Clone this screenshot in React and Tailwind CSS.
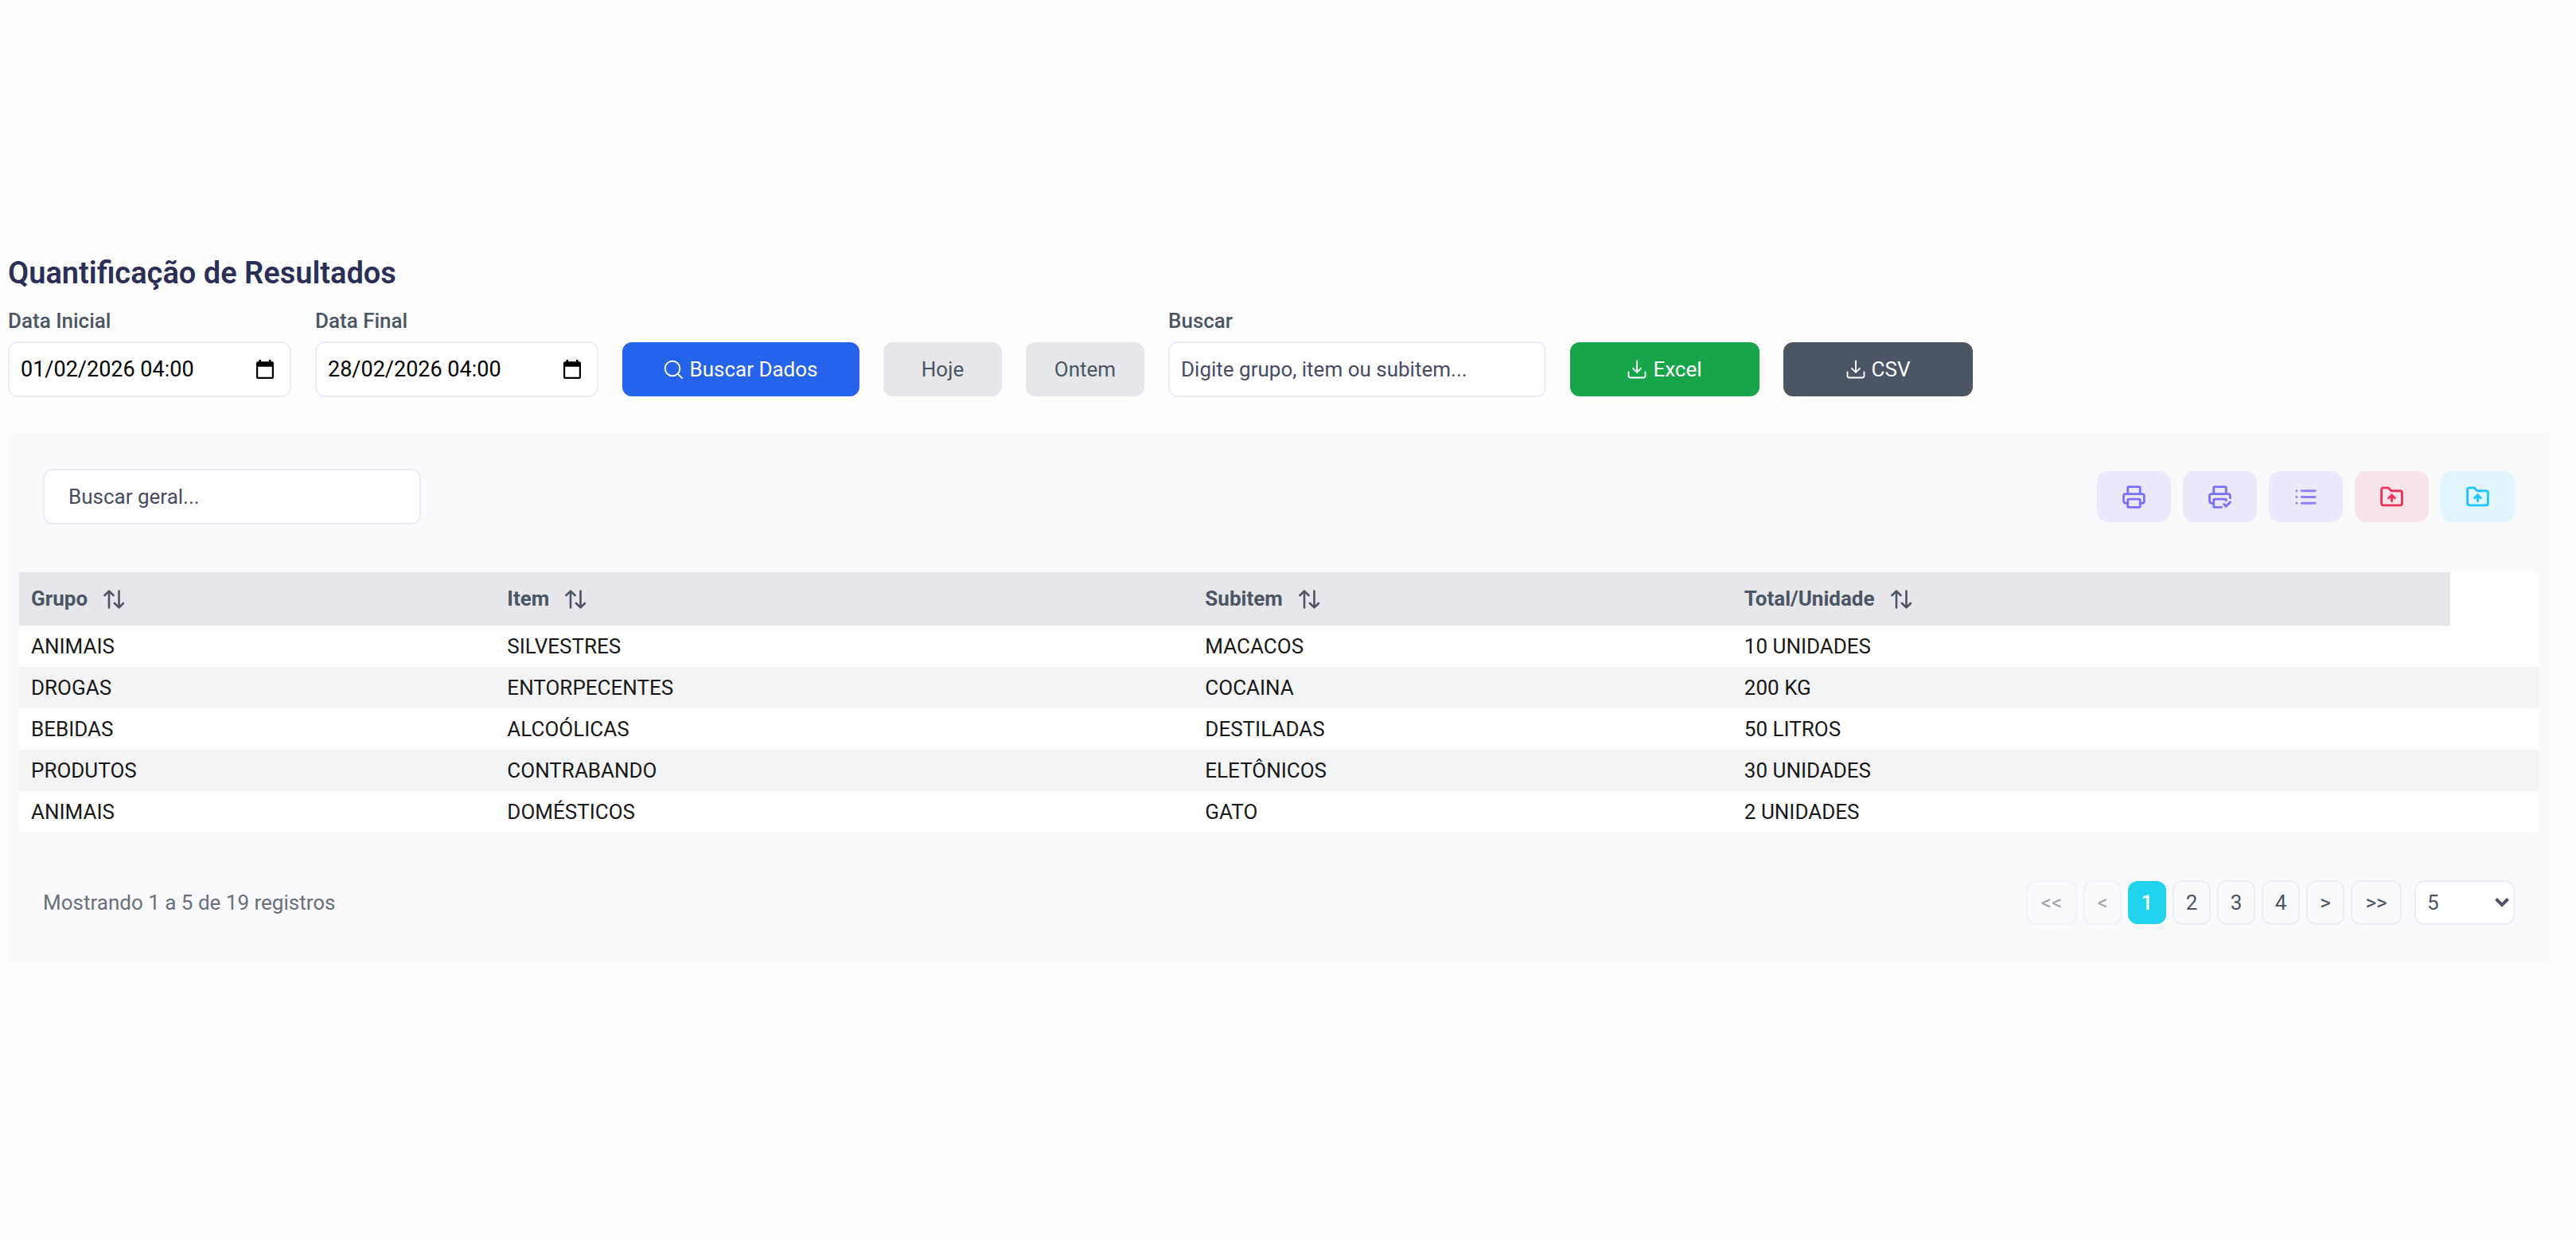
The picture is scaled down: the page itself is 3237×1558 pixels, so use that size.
import { useState } from "react";

const COLUMNS = [
  { key: "grupo", label: "Grupo", width: "w-[18.9%]" },
  { key: "item", label: "Item", width: "w-[27.7%]" },
  { key: "subitem", label: "Subitem", width: "w-[21.4%]" },
  { key: "total", label: "Total/Unidade", width: "w-[28.5%]" },
];

const ROWS = [
  { grupo: "ANIMAIS", item: "SILVESTRES", subitem: "MACACOS", total: "10 UNIDADES" },
  { grupo: "DROGAS", item: "ENTORPECENTES", subitem: "COCAINA", total: "200 KG" },
  { grupo: "BEBIDAS", item: "ALCOÓLICAS", subitem: "DESTILADAS", total: "50 LITROS" },
  { grupo: "PRODUTOS", item: "CONTRABANDO", subitem: "ELETÔNICOS", total: "30 UNIDADES" },
  { grupo: "ANIMAIS", item: "DOMÉSTICOS", subitem: "GATO", total: "2 UNIDADES" },
];

const inputClass =
  "h-[70px] rounded-xl border-2 border-[#ebedf6] bg-white outline-none placeholder:text-[#474b66] placeholder:opacity-100";
const buttonClass = "mb-px flex h-[68px] items-center justify-center gap-2 rounded-xl";
const pageButtonClass =
  "flex h-14 items-center justify-center rounded-xl border-2 border-[#ebedf6] disabled:opacity-50";

// Icons
function SearchIcon() {
  return (
    <svg className="size-6" viewBox="0 0 24 24" fill="none" stroke="currentColor" strokeWidth="1.9" strokeLinecap="round">
      <circle cx="11" cy="11" r="9.3" />
      <path d="M17.8 17.8 23 23" />
    </svg>
  );
}

function DownloadIcon() {
  return (
    <svg className="size-6" viewBox="0 0 24 24" fill="none" stroke="currentColor" strokeWidth="1.9" strokeLinecap="round" strokeLinejoin="round">
      <path d="M12 1.5v14" />
      <path d="m7 10.8 5 5 5-5" />
      <path d="M1.5 15.5V20A2.5 2.5 0 0 0 4 22.5h16a2.5 2.5 0 0 0 2.5-2.5v-4.5" />
    </svg>
  );
}

function SortIcon() {
  return (
    <svg className="h-6 w-[26px]" viewBox="0 0 26 24" fill="none" stroke="currentColor" strokeWidth="2.6" strokeLinecap="round" strokeLinejoin="round">
      <path d="M7 22.5V2M1.5 7 7 1.6 12.5 7" />
      <path d="M19.5 1.5V22M14 17l5.5 5.4L25 17" />
    </svg>
  );
}

function CalendarIcon() {
  return (
    <svg className="h-6 w-[22px]" viewBox="0 0 22 24" fill="currentColor">
      <path
        fillRule="evenodd"
        d="M3.5 0h2.6v2.2h9.8V0h2.6v2.2H20a2 2 0 0 1 2 2V22a2 2 0 0 1-2 2H2a2 2 0 0 1-2-2V4.2a2 2 0 0 1 2-2h1.5V0ZM2.2 8.800V21.800h17.600V8.800H2.200Z"
      />
    </svg>
  );
}

function ActionIcon({ children }) {
  return (
    <svg className="size-[31px]" viewBox="0 0 24 24" fill="none" stroke="currentColor" strokeWidth="2.2" strokeLinecap="round" strokeLinejoin="round">
      {children}
    </svg>
  );
}

const folderUp = (
  <>
    <path d="M20 20a2 2 0 0 0 2-2V8a2 2 0 0 0-2-2h-7.9a2 2 0 0 1-1.69-.9L9.6 3.9A2 2 0 0 0 7.93 3H4a2 2 0 0 0-2 2v13a2 2 0 0 0 2 2Z" />
    <path d="M12 10v6" />
    <path d="m9 13 3-3 3 3" />
  </>
);

const ACTIONS = [
  {
    label: "Imprimir",
    color: "bg-[#eaeafc] text-[#7c70ff]",
    icon: (
      <>
        <path d="M6 18H4a2 2 0 0 1-2-2v-5a2 2 0 0 1 2-2h16a2 2 0 0 1 2 2v5a2 2 0 0 1-2 2h-2" />
        <path d="M6 9V3a1 1 0 0 1 1-1h10a1 1 0 0 1 1 1v6" />
        <rect x="6" y="14" width="12" height="8" rx="1" />
      </>
    ),
  },
  {
    label: "Imprimir selecionados",
    color: "bg-[#eaeafc] text-[#7c70ff]",
    icon: (
      <>
        <path d="M13.5 22H7a1 1 0 0 1-1-1v-6a1 1 0 0 1 1-1h10a1 1 0 0 1 1 1v.5" />
        <path d="m16 19 2 2 4-4" />
        <path d="M6 18H4a2 2 0 0 1-2-2v-5a2 2 0 0 1 2-2h16a2 2 0 0 1 2 2v2" />
        <path d="M6 9V3a1 1 0 0 1 1-1h10a1 1 0 0 1 1 1v6" />
      </>
    ),
  },
  {
    label: "Colunas",
    color: "bg-[#eaeafc] text-[#8b81ff]",
    icon: <path d="M3 6h.01M3 12h.01M3 18h.01M8 6h13M8 12h13M8 18h13" />,
  },
  { label: "Exportar PDF", color: "bg-[#f8e5e9] text-[#ee3358]", icon: folderUp },
  { label: "Exportar Excel", color: "bg-[#e0f5fc] text-[#1cc6ff]", icon: folderUp },
];

function DateField({ id, label, value, onChange }) {
  return (
    <div className="flex flex-col">
      <label htmlFor={id} className="mb-2 leading-9 font-medium">
        {label}
      </label>
      <div className={`${inputClass} flex w-[356px] items-center pr-5 pl-[14px]`}>
        <input
          id={id}
          value={value}
          onChange={(e) => onChange(e.target.value)}
          className="min-w-0 flex-1 bg-transparent text-[27px] text-black outline-none"
        />
        <button aria-label={`Abrir calendário: ${label}`} className="text-black">
          <CalendarIcon />
        </button>
      </div>
    </div>
  );
}

export default function App() {
  const [start, setStart] = useState("01/02/2026 04:00");
  const [end, setEnd] = useState("28/02/2026 04:00");
  const [search, setSearch] = useState("");
  const [globalSearch, setGlobalSearch] = useState("");
  const [page, setPage] = useState(1);

  return (
    <div className="min-h-screen bg-[#fefefe] pt-[317px] pr-[33px] pl-[10px] font-['Roboto',sans-serif] text-[26px] text-[#4b5563]">
      <h1 className="mb-4 text-[38px] leading-[52px] font-semibold text-[#2b2f57]">
        Quantificação de Resultados
      </h1>

      {/* Filters */}
      <div className="mb-[45px] flex flex-wrap items-end gap-[30px]">
        <DateField id="data-inicial" label="Data Inicial" value={start} onChange={setStart} />
        <DateField id="data-final" label="Data Final" value={end} onChange={setEnd} />
        <button className={`${buttonClass} w-[298px] bg-[#2563eb] text-white`}>
          <SearchIcon />
          Buscar Dados
        </button>
        <button className={`${buttonClass} w-[149px] bg-gray-200`}>Hoje</button>
        <button className={`${buttonClass} w-[149px] bg-gray-200`}>Ontem</button>
        <div className="flex flex-col">
          <label htmlFor="buscar" className="mb-2 leading-9 font-medium">
            Buscar
          </label>
          <input
            id="buscar"
            value={search}
            onChange={(e) => setSearch(e.target.value)}
            placeholder="Digite grupo, item ou subitem..."
            className={`${inputClass} w-[475px] px-[14px]`}
          />
        </div>
        <button className={`${buttonClass} w-[238px] bg-[#18a54a] text-white`}>
          <DownloadIcon />
          Excel
        </button>
        <button className={`${buttonClass} w-[238px] bg-[#4b5563] text-white`}>
          <DownloadIcon />
          CSV
        </button>
      </div>

      {/* Table panel */}
      <div className="bg-[#f9fafc] px-[14px] py-[45px]">
        <div className="mb-[60px] flex items-center justify-between px-[30px]">
          <input
            aria-label="Buscar geral"
            value={globalSearch}
            onChange={(e) => setGlobalSearch(e.target.value)}
            placeholder="Buscar geral..."
            className={`${inputClass} w-[475px] px-[30px]`}
          />
          <div className="flex gap-[15px]">
            {ACTIONS.map((action) => (
              <button
                key={action.label}
                aria-label={action.label}
                className={`${action.color} flex h-16 w-[93px] items-center justify-center rounded-[14px]`}
              >
                <ActionIcon>{action.icon}</ActionIcon>
              </button>
            ))}
          </div>
        </div>

        <table className="w-full table-fixed bg-white text-left">
          <thead>
            <tr className="h-[67px]">
              {COLUMNS.map((col) => (
                <th key={col.key} className={`${col.width} bg-gray-200 px-[15px] font-bold`}>
                  <button className="flex items-center gap-5">
                    {col.label}
                    <SortIcon />
                  </button>
                </th>
              ))}
              <td />
            </tr>
          </thead>
          <tbody className="text-[#181818]">
            {ROWS.map((row, i) => (
              <tr key={i} className="h-[52px] even:bg-gray-100">
                {COLUMNS.map((col) => (
                  <td key={col.key} className="px-[15px]">
                    {row[col.key]}
                  </td>
                ))}
                <td />
              </tr>
            ))}
          </tbody>
        </table>

        <div className="mt-[60px] flex items-center justify-between px-[30px]">
          <p className="text-[#68707c]">Mostrando 1 a 5 de 19 registros</p>
          <div className="flex items-center gap-2">
            <button disabled={page === 1} onClick={() => setPage(1)} className={`${pageButtonClass} w-16`}>
              &lt;&lt;
            </button>
            <button disabled={page === 1} onClick={() => setPage(page - 1)} className={`${pageButtonClass} w-12`}>
              &lt;
            </button>
            {[1, 2, 3, 4].map((n) => (
              <button
                key={n}
                onClick={() => setPage(n)}
                className={
                  n === page
                    ? "flex h-[54px] w-12 items-center justify-center rounded-xl bg-[#22d3ee] font-medium text-white"
                    : `${pageButtonClass} w-12`
                }
              >
                {n}
              </button>
            ))}
            <button disabled={page === 4} onClick={() => setPage(page + 1)} className={`${pageButtonClass} w-12`}>
              &gt;
            </button>
            <button disabled={page === 4} onClick={() => setPage(4)} className={`${pageButtonClass} w-16`}>
              &gt;&gt;
            </button>
            <div className="relative ml-2">
              <select
                aria-label="Registros por página"
                defaultValue="5"
                className="h-14 w-[126px] appearance-none rounded-xl border-2 border-[#ebedf6] bg-white pl-[14px]"
              >
                <option>5</option>
                <option>10</option>
                <option>20</option>
              </select>
              <svg
                className="pointer-events-none absolute top-[22px] right-[7px] h-3 w-[18px]"
                viewBox="0 0 18 12"
                fill="none"
                stroke="currentColor"
                strokeWidth="4"
              >
                <path d="m1.5 1.5 7.5 7.5 7.5-7.5" />
              </svg>
            </div>
          </div>
        </div>
      </div>
    </div>
  );
}
